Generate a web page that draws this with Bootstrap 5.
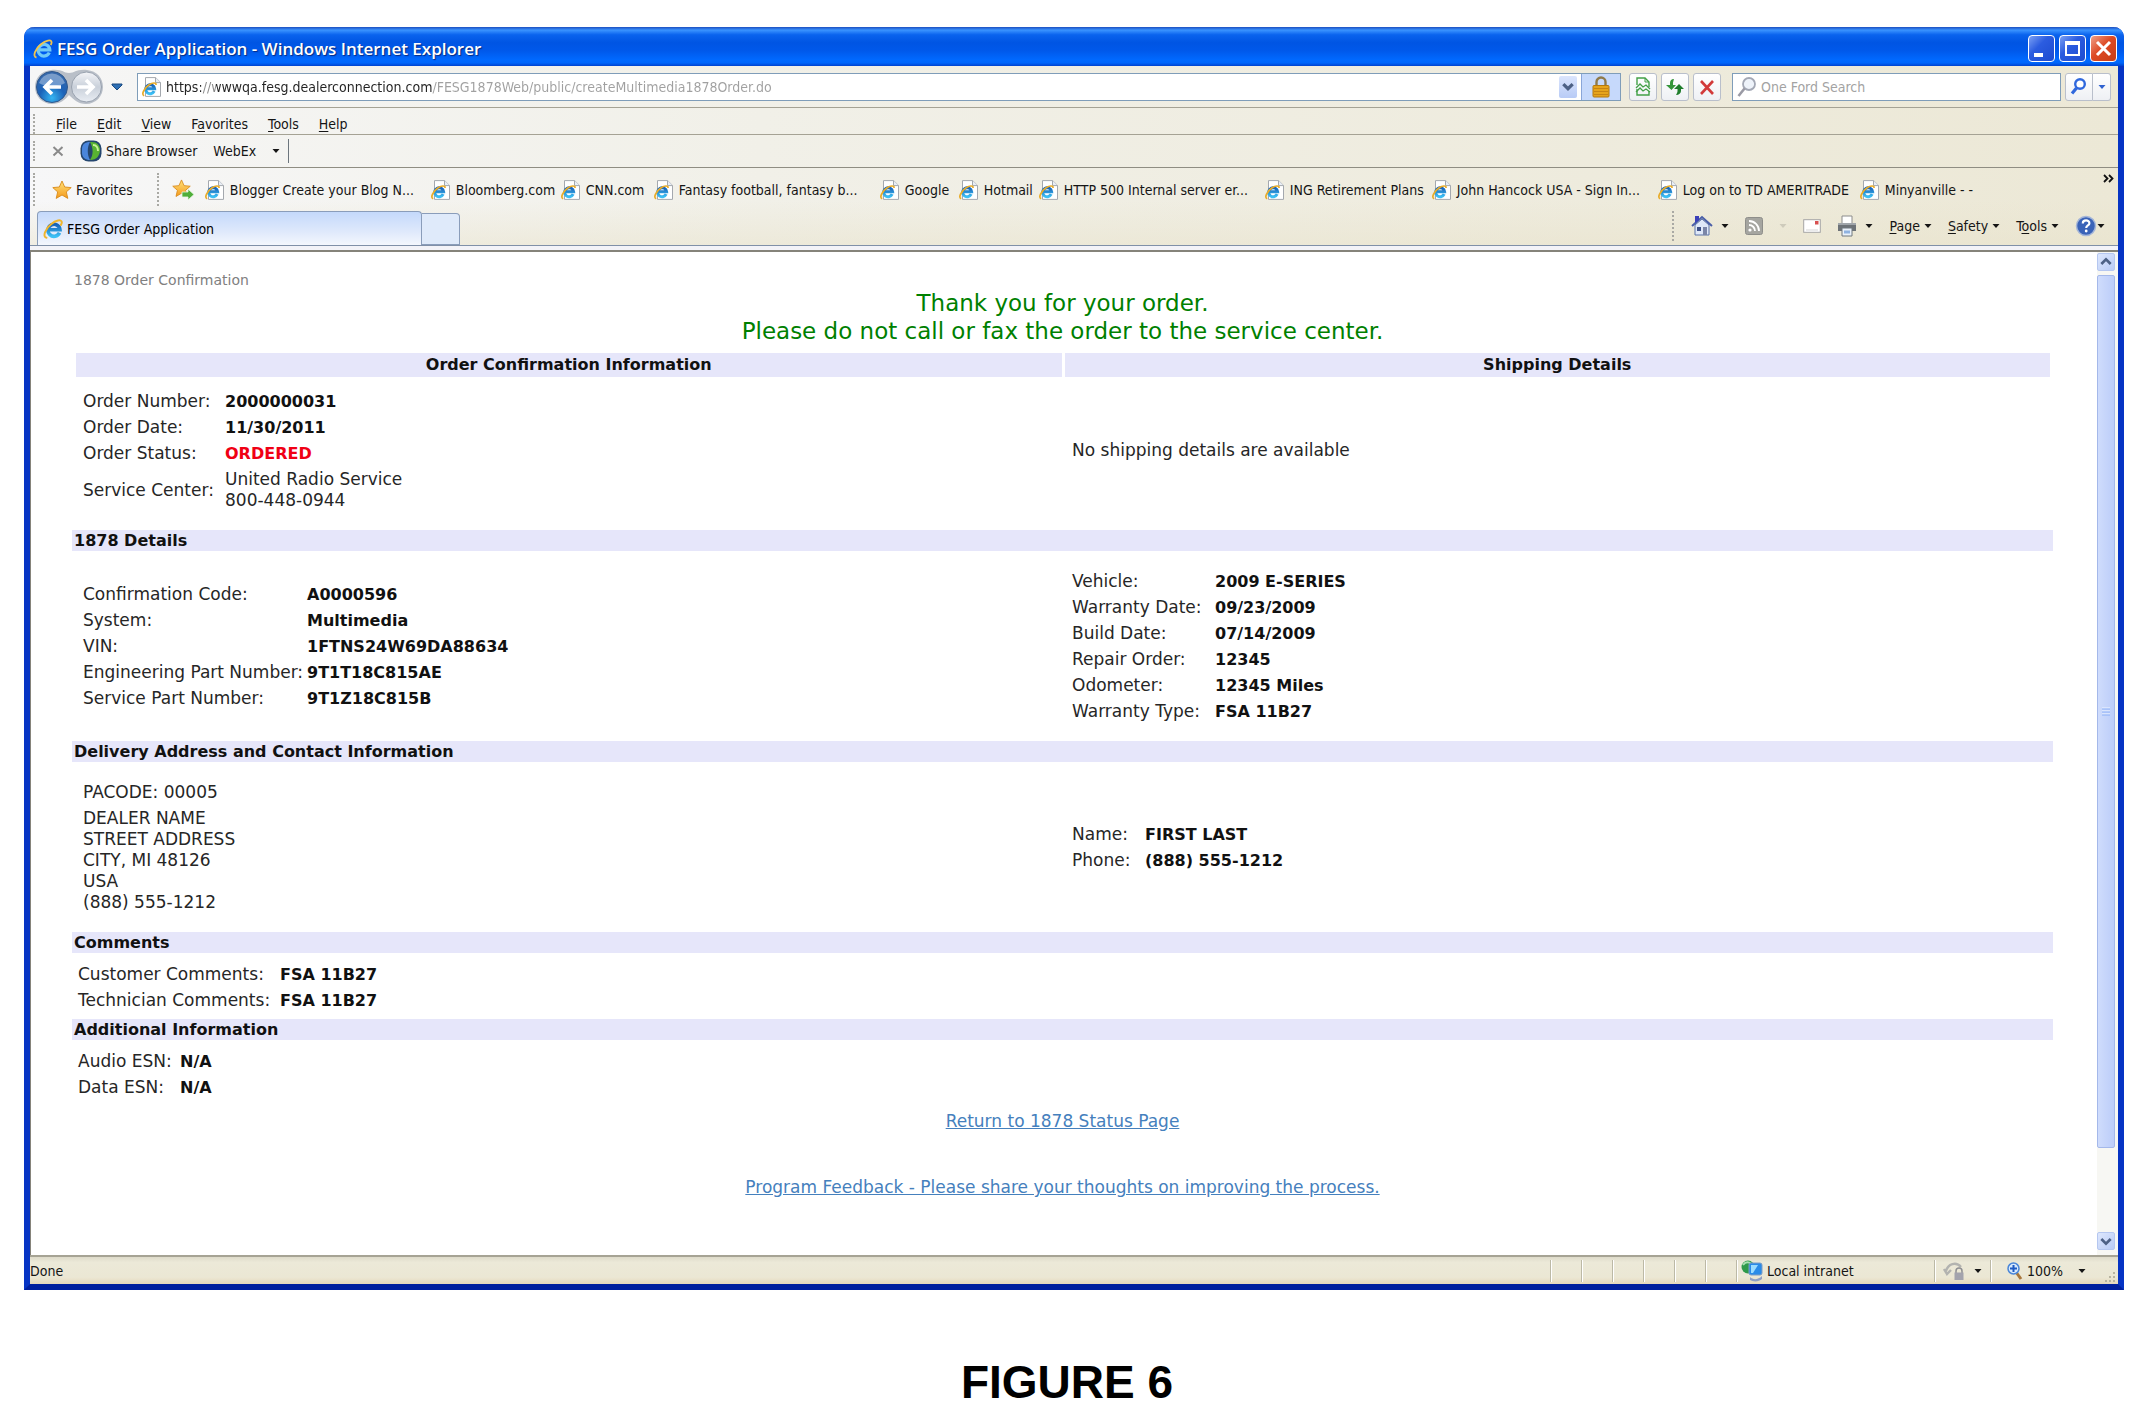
<!DOCTYPE html>
<html lang="en">
<head>
<meta charset="utf-8">
<meta name="viewport" content="width=device-width, initial-scale=1">
<title>FESG Order Application</title>
<link href="https://cdn.jsdelivr.net/npm/bootstrap@5.3.0/dist/css/bootstrap.min.css" rel="stylesheet">
<style>
body{background:#fff;color:#222;font-family:"DejaVu Sans",Verdana,sans-serif;font-size:16px;line-height:21px}
.ie-window{margin:27px 24px 0;border:solid #0a3fd0;border-width:0 6px 6px;border-color:#0a3fd0 #0634c4 #001f9e;border-radius:10px 10px 0 0;background:#ece9d8;font-family:"DejaVu Sans Condensed",Tahoma,sans-serif;font-size:14px;line-height:20px;color:#151515}
.ie-window svg{display:block;flex:none}
.title-strip{height:39px;margin:0 -6px;padding:4px 7px 0 9px;border-radius:10px 10px 0 0;background:linear-gradient(#1c4fc0 0,#3a93ff 8%,#0a63ee 20%,#0055e3 40%,#0058ea 60%,#0069ff 84%,#0066fb 92%,#0042cf 100%);color:#fff;gap:4px}
.title-strip h1{font:600 17px/24px "Open Sans",sans-serif;margin:0;text-shadow:1px 1px 1px #062a80}
.cap-btn{width:27px;height:27px;padding:0;border:1px solid #fff;border-radius:4px;background:linear-gradient(135deg,#7ba0f4,#2b5ce0 40%,#1d4bd0)}
.cap-close{background:linear-gradient(135deg,#f0a088,#dd4a24 45%,#c83c14)}
.nav-strip{height:42px;padding:1px 7px 0 5px;background:linear-gradient(90deg,#f6f6f6,#f1f0e8 35%,#ece8d6);border-bottom:1px solid #a5a294;box-shadow:0 1px #fff}
.plain{padding:0;border:0;background:none;color:inherit;line-height:20px;white-space:nowrap}
.plain u{text-underline-offset:2px}
.field{height:28px;border:1px solid #7f9db9;background:#fff}
.field input{border:0;outline:0;background:transparent;min-width:0;padding:0;height:24px;color:#333}
.addr-field{margin-left:14px}
.addr-field input{color:transparent;background:linear-gradient(90deg,#222 0 35px,#888 35px 50px,#222 50px 266px,#a0a0a0 266px);-webkit-background-clip:text;background-clip:text}
.drop-cap{width:18px;height:22px;background:linear-gradient(#dbe5fd,#b8cbf6);border-radius:2px}
.lock-cell{width:39px;height:26px;background:#c6d9fb;border-left:1px solid #8aa6d8}
.tool-btn{width:28px;height:28px;padding:0;border:1px solid #b9bfcb;border-radius:3px;background:linear-gradient(#fff,#eef0f4)}
.search-field{width:329px;margin-left:11px}
.search-field input::placeholder{color:#a3a3a3;opacity:1}
.go-btn{border-radius:3px 0 0 3px}
.go-more{width:18px;border-radius:0 3px 3px 0;border-left:0;color:#2f62d0}
.strip{background:linear-gradient(90deg,#f6f6f6,#f1f0e8 35%,#ece8d6);padding-left:3px}
.menu-strip{height:27px;padding-top:5px;border-bottom:1px solid #a5a294;gap:20px}
.webex-strip{height:33px;border-bottom:1px solid #8f8d82}
.fav-tabs{background:linear-gradient(#fff0 40%,#e8e2ca88),linear-gradient(90deg,#f7f7f8,#f1f0e8 35%,#ece8d6)}
.grip{width:3px;flex:none;border-left:2px dotted #a9a9a4}
.menu-strip .grip,.webex-strip .grip{height:20px}
.fav-row{height:43px;padding-left:3px}
.fav-grid{display:grid;grid-template-columns:226px 130px 93px 226px 79px 80px 226px 167px 226px 202px auto;margin-left:11px}
.fav-grid a,.fav-row a{color:inherit;text-decoration:none;display:flex;align-items:center;gap:5px;white-space:nowrap}
.tab-row{height:35px;padding-left:7px;border-bottom:1px solid #8090a8}
.tab-on{width:385px;height:34px;border:1px solid #8a9dba;border-bottom:0;border-radius:4px 4px 0 0;background:linear-gradient(#c4d9fb,#dfe9fb 60%,#f4f7fd);padding:0 5px;text-align:left}
.tab-new{width:38px;height:32px;border:1px solid #8a9dba;border-left-width:0;border-radius:0 4px 0 0;background:#dfeafa;padding:0}
.cmd-row{margin-right:13px;height:30px}
.cmd-row .plain{display:flex;align-items:center}
.seam{height:4px;background:#f3f3f8}
.viewport-row{border-top:2px solid #85837a;background:#fff}
.page-pane{padding:20px 44px 57px 41px;border-left:1px solid #85837a;font-family:"DejaVu Sans",Verdana,sans-serif;font-size:17px;line-height:21px;color:#262626}
.crumb{font-size:14px;line-height:17px;color:#808080;padding-left:2px}
.thanks{font-size:23px;line-height:28px;color:#008000;margin:0;font-weight:400;padding-bottom:8px}
.band{background:#e6e6fa;font-size:16px;font-weight:700;line-height:21px;color:#111;margin:0;padding-left:2px}
.split-bands{padding:0 3px 0 4px;gap:3px}
.split-bands .band{line-height:24px;padding:0;text-align:center}
.sect{padding:17px 0 17px 11px}
.sect-top{padding-top:11px}
.sect-low{padding:8px 0 6px 6px}
.facts td,.facts th{padding:3px 0 2px;font-weight:400;vertical-align:middle;white-space:nowrap}
.facts td{font-weight:700;color:#111;font-size:16px}
.facts td.soft{font-weight:400;color:#262626;font-size:17px}
.facts td.status{color:#f00014}
.w-order th{width:142px}.w-detail th{width:224px}.w-car th{width:143px}.w-name th{width:73px}.w-note th{width:202px}.w-esn th{width:102px}
.pane-links a{color:#4580bd;text-decoration:underline}
.pane-links p{margin:0;padding-top:11px;padding-bottom:34px}
.pane-links p+p{padding-bottom:0}
.scroller{width:21px;padding:1px 3px 5px 0;background:#f7f7f3}
.sc-btn{width:18px;height:18px;padding:0;border:1px solid #b5c7f0;border-radius:2px;background:linear-gradient(135deg,#dde7fd,#b9cbf5)}
.sc-thumb{width:18px;border:1px solid #a4b8ea;border-radius:2px;background:linear-gradient(90deg,#cfdcfc,#bccdf9);flex:0 1 873px;margin-top:4px}
.status-strip{height:29px;border-top:2px solid #a6a394;background:linear-gradient(#dedbca,#ece9d8 20%,#ebe7d4 75%,#e6d8bb)}
.cell-sep{width:31px;height:22px;border-left:1px solid #bcb9a6;box-shadow:inset 1px 0 #fff}
.s-zone{width:198px}.s-lock{width:56px}.s-zoom{width:112px}
.figure-name{font:700 46px/52px "Liberation Sans",Arial,sans-serif;color:#000;padding:66px 0 0;margin:0 14px 0 0}
</style>
<script src="https://cdn.jsdelivr.net/npm/bootstrap@5.3.0/dist/js/bootstrap.bundle.min.js" defer></script>
</head>
<body>
<svg width="0" height="0" class="position-absolute" aria-hidden="true">
<defs>
<radialGradient id="gBack" cx=".5" cy=".85" r=".9"><stop offset="0" stop-color="#35b5f2"/><stop offset=".45" stop-color="#1c62b8"/><stop offset="1" stop-color="#3c6aa8"/></radialGradient>
<linearGradient id="gFwd" x1="0" y1="0" x2="0" y2="1"><stop offset="0" stop-color="#f4f5f8"/><stop offset=".5" stop-color="#c9d0da"/><stop offset="1" stop-color="#e9edf3"/></linearGradient>
<linearGradient id="gE" x1="0" y1="0" x2="0" y2="1"><stop offset="0" stop-color="#1762b8"/><stop offset="1" stop-color="#3cc0f5"/></linearGradient>
<linearGradient id="gStar" x1="0" y1="0" x2="0" y2="1"><stop offset="0" stop-color="#ffe27a"/><stop offset="1" stop-color="#f59a1c"/></linearGradient>
</defs>
<symbol id="i-e" viewBox="0 0 20 20"><path d="M16.500 13.800A6 6 0 1 1 17 10.800H6" fill="none" stroke="url(#gE)" stroke-width="3.600"/><path d="M3.500 18.800C-1 17.800 2.500 9.500 8 5.200 12.500 1.500 18.500-.2 18.800 3.200c0 1-.4 1.900-.9 2.700" fill="none" stroke="#f0b52c" stroke-width="2" stroke-linecap="round"/></symbol>
<symbol id="i-page" viewBox="0 0 20 20"><path d="M3.500.6h10.200l4.800 4.800v14h-15z" fill="#fff" stroke="#a4a8ae"/><path d="M13.500.6v5h5" fill="#e9eef5" stroke="#a4a8ae"/><path d="M12.200 14.200A4.500 4.500 0 1 1 12.600 11.700H4" fill="none" stroke="url(#gE)" stroke-width="3"/><path d="M2.200 18.800c-3.400-1.200.2-7.800 4.600-10.800C10.500 5.500 14.400 5.200 14 8" fill="none" stroke="#e8ac2a" stroke-width="1.700"/></symbol>
<symbol id="i-star" viewBox="0 0 20 20"><path d="M10 1l2.700 6 6.500.6-4.900 4.300 1.500 6.500L10 15l-5.800 3.400 1.500-6.500L.8 7.600 7.300 7z" fill="url(#gStar)" stroke="#d88a1a" stroke-width=".9"/></symbol>
<symbol id="i-down" viewBox="0 0 8 8"><path d="M.5 2h7L4 6z" fill="currentColor"/></symbol>
<symbol id="i-chev" viewBox="0 0 12 12"><path d="M2 3.500L6 7.500 10 3.500" fill="none" stroke="#4d6185" stroke-width="2.800"/></symbol>
</svg>

<main class="ie-window">
<header class="title-strip d-flex align-items-center">
<svg width="20" height="20" viewBox="0 0 20 20"><path d="M16.300 13.600A5.800 5.800 0 1 1 16.800 10.800H6" fill="none" stroke="#6fc9f8" stroke-width="3.200"/><path d="M3.500 18.500C-1 17.500 2.500 9.500 8 5.200 12.500 1.500 18.500-.2 18.600 3.200c0 1-.4 1.900-.9 2.700" fill="none" stroke="#f0c44c" stroke-width="1.800"/></svg>
<h1 class="flex-grow-1">FESG Order Application - Windows Internet Explorer</h1>
<button class="cap-btn" aria-label="Minimize"><svg width="25" height="25" viewBox="0 0 25 25"><path d="M5 17h9v4H5z" fill="#fff"/></svg></button>
<button class="cap-btn" aria-label="Maximize"><svg width="25" height="25" viewBox="0 0 25 25"><path d="M6 7h13v12H6z" fill="none" stroke="#fff" stroke-width="2"/><path d="M5 7h15" stroke="#fff" stroke-width="4"/></svg></button>
<button class="cap-btn cap-close" aria-label="Close"><svg width="25" height="25" viewBox="0 0 25 25"><path d="M6 6l13 13M19 6L6 19" stroke="#fff" stroke-width="3"/></svg></button>
</header>

<div class="nav-strip d-flex align-items-center">
<button class="plain" aria-label="Back and forward"><svg width="68" height="36" viewBox="0 0 68 36"><path d="M16 1C28 0 28 4 34 4s7-4 18-3c10 1 16 8 16 17s-7 17-17 17c-8 0-13-5-17-9-4 5-9 9-17 9C7 35 0 27 0 18S6 2 16 1z" fill="#b9bfc8"/><circle cx="17" cy="18" r="15.500" fill="url(#gBack)" stroke="#30588c"/><path d="M4 14a13.500 13 0 0 1 26 0c-7 4-18 5-26 0z" fill="#fff" opacity=".35"/><path d="M26 18H11M17 11l-7 7 7 7" fill="none" stroke="#fff" stroke-width="3.600"/><circle cx="51.500" cy="18" r="15" fill="url(#gFwd)" stroke="#98a1ae"/><path d="M42 18h15M51 11l7 7-7 7" fill="none" stroke="#fff" stroke-width="3.600"/></svg></button>
<button class="plain ms-2" aria-label="Recent pages"><svg width="12" height="8" viewBox="0 0 12 8"><path d="M1 1h10v1L6 7 1 2z" fill="#2d6fb4" stroke="#1b4a80"/></svg></button>
<div class="field addr-field d-flex align-items-center flex-grow-1 ps-1">
<svg width="20" height="20"><use href="#i-page"/></svg>
<input class="flex-grow-1 ms-1" aria-label="Address" value="https://wwwqa.fesg.dealerconnection.com/FESG1878Web/public/createMultimedia1878Order.do">
<button class="plain drop-cap d-flex align-items-center justify-content-center me-1" aria-label="Address list"><svg width="14" height="14"><use href="#i-chev"/></svg></button>
<span class="lock-cell d-flex align-items-center justify-content-center"><svg width="18" height="22" viewBox="0 0 18 22"><path d="M4.500 11V6a4.500 4.500 0 0 1 9 0v5" fill="none" stroke="#8f7a4a" stroke-width="2.400"/><rect x="1" y="9.500" width="16" height="11.500" rx="1" fill="#e6a41c" stroke="#b5790f"/><path d="M2 12.500h14M2 15.500h14M2 18.500h14" stroke="#c68414"/></svg></span>
</div>
<button class="tool-btn ms-2" aria-label="Compatibility view"><svg width="26" height="26" viewBox="0 0 26 26"><path d="M7 11V4h8l4 4v5M7 15v6h12v-4" fill="none" stroke="#43a047" stroke-width="1.400"/><path d="M15 4v4h4" fill="none" stroke="#43a047"/><path d="M6 14l4-4 3 3 3-2 4 4M6 18l4-4 3 3 3-2 4 3" fill="none" stroke="#43a047" stroke-width="1.300"/></svg></button>
<button class="tool-btn ms-1" aria-label="Refresh"><svg width="26" height="26" viewBox="0 0 26 26"><path d="M12 5c-3 0-4 2-4 4v2H4l5.500 5L14 11h-3V9c0-1 .5-2 1-4z" fill="#35963a"/><path d="M14 21c3 0 5-2 5-4v-2h3l-5-5-5 5h3.500v2c0 1-.5 2-1.500 4z" fill="#1f7d2c"/></svg></button>
<button class="tool-btn ms-1" aria-label="Stop"><svg width="26" height="26" viewBox="0 0 26 26"><path d="M7 7l12 13M19 7L7 20" stroke="#d23a3a" stroke-width="2.600"/></svg></button>
<div class="field search-field d-flex align-items-center">
<svg class="ms-1" width="20" height="22" viewBox="0 0 20 22"><circle cx="12" cy="8" r="6" fill="#eef3fa" stroke="#a3a8b5" stroke-width="1.800"/><path d="M7.500 12.500L1.500 20" stroke="#9a9aa5" stroke-width="2.600"/></svg>
<input class="flex-grow-1 ms-1" aria-label="Search" placeholder="One Ford Search">
</div>
<button class="tool-btn go-btn ms-1" aria-label="Go"><svg width="26" height="26" viewBox="0 0 26 26"><circle cx="14" cy="10" r="4.800" fill="#fff" stroke="#3068dd" stroke-width="2.400"/><path d="M10.500 14L6 19.500" stroke="#3068dd" stroke-width="3.200"/></svg></button>
<button class="tool-btn go-more d-flex align-items-center justify-content-center" aria-label="Search options"><svg width="8" height="8"><use href="#i-down"/></svg></button>
</div>

<nav class="strip menu-strip d-flex align-items-center">
<span class="grip"></span>
<button class="plain"><u>F</u>ile</button><button class="plain"><u>E</u>dit</button><button class="plain"><u>V</u>iew</button><button class="plain">F<u>a</u>vorites</button><button class="plain"><u>T</u>ools</button><button class="plain"><u>H</u>elp</button>
</nav>
<div class="strip webex-strip d-flex align-items-center">
<span class="grip me-3"></span>
<button class="plain me-3" aria-label="Close toolbar"><svg width="12" height="12" viewBox="0 0 12 12"><path d="M1.500 2l9 8.500M10.500 2l-9 8.500" stroke="#8a8a8a" stroke-width="2"/></svg></button>
<button class="plain d-flex align-items-center gap-1 me-3"><svg width="22" height="22" viewBox="0 0 22 22"><rect x=".5" y=".5" width="21" height="21" rx="8" fill="#24466e"/><path d="M10 2C5 2 2 4.500 2 9v4c0 4.500 3.500 7 8 7-3-5-3-13 0-18z" fill="#4a86dc"/><path d="M10 2c7-.5 10 3 10 8s-3 10-10 10c3.500-5 3.500-12 0-18z" fill="#58b432"/><path d="M13 5c3.500 0 5 3 5 6" stroke="#c9f09a" fill="none" stroke-width="2"/></svg>Share Browser</button>
<button class="plain d-flex align-items-center gap-3">WebEx <svg width="8" height="8"><use href="#i-down"/></svg></button>
<span class="border-start border-secondary ms-2 h-75"></span>
</div>

<div class="fav-tabs">
<div class="fav-row d-flex align-items-center">
<span class="grip h-75"></span>
<button class="plain d-flex align-items-center gap-1 ms-3 me-4"><svg width="20" height="20"><use href="#i-star"/></svg>Favorites</button>
<span class="grip h-75 me-2"></span>
<button class="plain ms-1" aria-label="Add to favorites bar"><svg width="22" height="22" viewBox="0 0 22 22"><use href="#i-star" width="19" height="19"/><path d="M10 13h6v-3l6 5.500-6 5.500v-3h-6z" fill="#4fae3a" stroke="#e9f6e4" stroke-width=".8"/></svg></button>
<div class="fav-grid">
<a href="#"><svg width="20" height="20"><use href="#i-page"/></svg>Blogger Create your Blog N...</a>
<a href="#"><svg width="20" height="20"><use href="#i-page"/></svg>Bloomberg.com</a>
<a href="#"><svg width="20" height="20"><use href="#i-page"/></svg>CNN.com</a>
<a href="#"><svg width="20" height="20"><use href="#i-page"/></svg>Fantasy football, fantasy b...</a>
<a href="#"><svg width="20" height="20"><use href="#i-page"/></svg>Google</a>
<a href="#"><svg width="20" height="20"><use href="#i-page"/></svg>Hotmail</a>
<a href="#"><svg width="20" height="20"><use href="#i-page"/></svg>HTTP 500 Internal server er...</a>
<a href="#"><svg width="20" height="20"><use href="#i-page"/></svg>ING Retirement Plans</a>
<a href="#"><svg width="20" height="20"><use href="#i-page"/></svg>John Hancock USA - Sign In...</a>
<a href="#"><svg width="20" height="20"><use href="#i-page"/></svg>Log on to TD AMERITRADE</a>
<a href="#"><svg width="20" height="20"><use href="#i-page"/></svg>Minyanville - -</a>
</div>
<button class="plain ms-auto me-1 align-self-start" aria-label="More favorites"><svg width="12" height="20" viewBox="0 0 12 20"><path d="M2 7l3.500 3.500L2 14M7 7l3.500 3.500L7 14" fill="none" stroke="#111" stroke-width="1.800"/></svg></button>
</div>
<div class="tab-row d-flex align-items-end">
<button class="tab-on d-flex align-items-center gap-1"><svg width="20" height="20"><use href="#i-e"/></svg>FESG Order Application</button>
<button class="tab-new" aria-label="New tab"></button>
<div class="cmd-row d-flex align-items-center ms-auto align-self-start">
<span class="grip h-100 me-3"></span>
<button class="plain" aria-label="Home"><svg width="22" height="22" viewBox="0 0 22 22"><path d="M4 10v10h14V10l-7-6z" fill="#dfe8f8" stroke="#5a72a8"/><path d="M1 11L11 2l10 9" fill="none" stroke="#4a5fa8" stroke-width="2"/><path d="M4 1h4v4L4 8z" fill="#3b3fb8"/><path d="M12 12h4v8h-4z" fill="#7b86a8"/><path d="M6 12h4v4H6z" fill="#3d4f88"/></svg><svg class="ms-2" width="8" height="8"><use href="#i-down"/></svg></button>
<button class="plain ms-3" aria-label="Feeds"><svg width="18" height="18" viewBox="0 0 18 18"><rect x=".5" y=".5" width="17" height="17" rx="2" fill="#a5a5a0" stroke="#8e8e8a"/><circle cx="5" cy="13" r="1.600" fill="#fff"/><path d="M4 8a6 6 0 0 1 6 6M4 4a10 10 0 0 1 10 10" fill="none" stroke="#fff" stroke-width="1.800"/></svg><svg class="ms-3 text-black-50 opacity-25" width="8" height="8"><use href="#i-down"/></svg></button>
<button class="plain ms-3" aria-label="Mail"><svg width="18" height="14" viewBox="0 0 18 14"><rect x=".7" y=".7" width="16.600" height="12.600" fill="#fff" stroke="#a5a5a5"/><path d="M12 2h3.500v3.500H12z" fill="#d85050"/><path d="M3 11h12" stroke="#d5d5d5"/></svg></button>
<button class="plain ms-3" aria-label="Print"><svg width="20" height="22" viewBox="0 0 20 22"><path d="M5 1h10v8H5z" fill="#fff" stroke="#8c8c8c"/><path d="M1 8h18v8H1z" fill="#6d7277"/><path d="M1 8h18v2H1z" fill="#a0a5aa"/><path d="M5 13h10v8H5z" fill="#eaf1fa" stroke="#70787f"/><path d="M7 15.500h6v3H7z" fill="#8fb2e0"/></svg><svg class="ms-2" width="8" height="8"><use href="#i-down"/></svg></button>
<button class="plain ms-3"><span><u>P</u>age</span><svg class="ms-1" width="8" height="8"><use href="#i-down"/></svg></button>
<button class="plain ms-3"><span><u>S</u>afety</span><svg class="ms-1" width="8" height="8"><use href="#i-down"/></svg></button>
<button class="plain ms-3"><span>T<u>o</u>ols</span><svg class="ms-1" width="8" height="8"><use href="#i-down"/></svg></button>
<button class="plain ms-3" aria-label="Help"><svg width="22" height="22" viewBox="0 0 22 22"><circle cx="11" cy="11" r="9.500" fill="#3a63b8" stroke="#a5b6d8" stroke-width="1.500"/><path d="M7.800 8.500c0-4 6.600-4 6.600-.3 0 2.300-3.200 2.300-3.200 4.800" fill="none" stroke="#fff" stroke-width="2.200"/><circle cx="11.200" cy="16" r="1.400" fill="#fff"/></svg><svg width="8" height="8"><use href="#i-down"/></svg></button>
</div>
</div>
<div class="seam"></div>
</div>

<div class="viewport-row d-flex">
<section class="page-pane flex-grow-1">
<div class="crumb">1878 Order Confirmation</div>
<h2 class="thanks text-center">Thank you for your order.<br>Please do not call or fax the order to the service center.</h2>
<div class="split-bands d-flex"><h3 class="band w-50">Order Confirmation Information</h3><h3 class="band w-50">Shipping Details</h3></div>
<div class="row g-0 sect sect-top align-items-center">
<div class="col-6"><table class="facts w-order">
<tr><th scope="row">Order Number:</th><td>2000000031</td></tr>
<tr><th scope="row">Order Date:</th><td>11/30/2011</td></tr>
<tr><th scope="row">Order Status:</th><td class="status">ORDERED</td></tr>
<tr><th scope="row">Service Center:</th><td class="soft">United Radio Service<br>800-448-0944</td></tr>
</table></div>
<div class="col-6 ps-1">No shipping details are available</div>
</div>
<h3 class="band">1878 Details</h3>
<div class="row g-0 sect align-items-center">
<div class="col-6"><table class="facts w-detail">
<tr><th scope="row">Confirmation Code:</th><td>A0000596</td></tr>
<tr><th scope="row">System:</th><td>Multimedia</td></tr>
<tr><th scope="row">VIN:</th><td>1FTNS24W69DA88634</td></tr>
<tr><th scope="row">Engineering Part Number:</th><td>9T1T18C815AE</td></tr>
<tr><th scope="row">Service Part Number:</th><td>9T1Z18C815B</td></tr>
</table></div>
<div class="col-6 ps-1"><table class="facts w-car">
<tr><th scope="row">Vehicle:</th><td>2009 E-SERIES</td></tr>
<tr><th scope="row">Warranty Date:</th><td>09/23/2009</td></tr>
<tr><th scope="row">Build Date:</th><td>07/14/2009</td></tr>
<tr><th scope="row">Repair Order:</th><td>12345</td></tr>
<tr><th scope="row">Odometer:</th><td>12345 Miles</td></tr>
<tr><th scope="row">Warranty Type:</th><td>FSA 11B27</td></tr>
</table></div>
</div>
<h3 class="band">Delivery Address and Contact Information</h3>
<div class="row g-0 sect align-items-center">
<div class="col-6"><table class="facts">
<tr><td class="soft">PACODE: 00005</td></tr>
<tr><td class="soft">DEALER NAME<br>STREET ADDRESS<br>CITY, MI 48126<br>USA<br>(888) 555-1212</td></tr>
</table></div>
<div class="col-6 ps-1"><table class="facts w-name">
<tr><th scope="row">Name:</th><td>FIRST LAST</td></tr>
<tr><th scope="row">Phone:</th><td>(888) 555-1212</td></tr>
</table></div>
</div>
<h3 class="band">Comments</h3>
<div class="sect-low"><table class="facts w-note">
<tr><th scope="row">Customer Comments:</th><td>FSA 11B27</td></tr>
<tr><th scope="row">Technician Comments:</th><td>FSA 11B27</td></tr>
</table></div>
<h3 class="band">Additional Information</h3>
<div class="sect-low pb-0"><table class="facts w-esn">
<tr><th scope="row">Audio ESN:</th><td>N/A</td></tr>
<tr><th scope="row">Data ESN:</th><td>N/A</td></tr>
</table></div>
<div class="pane-links text-center"><p><a href="#">Return to 1878 Status Page</a></p><p><a href="#">Program Feedback - Please share your thoughts on improving the process.</a></p></div>
</section>
<div class="scroller d-flex flex-column">
<button class="sc-btn" aria-label="Scroll up"><svg width="16" height="16" viewBox="0 0 12 12"><path d="M2.500 7.500L6 4l3.500 3.500" fill="none" stroke="#4d6185" stroke-width="2"/></svg></button>
<div class="sc-thumb d-flex align-items-center justify-content-center"><svg width="8" height="10" viewBox="0 0 8 10"><path d="M0 1h8M0 4h8M0 7h8" stroke="#eef4fe"/><path d="M0 2h8M0 5h8M0 8h8" stroke="#8cb0f8"/></svg></div>
<button class="sc-btn mt-auto" aria-label="Scroll down"><svg width="16" height="16" viewBox="0 0 12 12"><path d="M2.500 4.500L6 8l3.500-3.500" fill="none" stroke="#4d6185" stroke-width="2"/></svg></button>
</div>
</div>

<footer class="status-strip d-flex align-items-center">
<span class="flex-grow-1">Done</span>
<span class="cell-sep"></span><span class="cell-sep"></span><span class="cell-sep"></span><span class="cell-sep"></span><span class="cell-sep"></span><span class="cell-sep"></span>
<span class="cell-sep s-zone d-flex align-items-center gap-1 ps-1"><svg width="22" height="22" viewBox="0 0 22 22"><circle cx="7" cy="7" r="6.500" fill="#2f9a4a"/><path d="M2 5c3-4 6-3 8-1" stroke="#a9e0b0" fill="none" stroke-width="2"/><rect x="8" y="3" width="13" height="12" rx="2" fill="#2a8be8" stroke="#7f9cc4"/><path d="M10 5h7l-5 8h-2z" fill="#9bdcff"/><path d="M9 17c3 3 8 3 12-1v3c-3 3-9 3-12 1z" fill="#8f9fc4"/></svg>Local intranet</span>
<span class="cell-sep s-lock d-flex align-items-center justify-content-between ps-2 pe-2"><svg width="22" height="20" viewBox="0 0 22 20"><path d="M3 10C5 3 13 0 18 6M1 8l3 5 4-4" fill="none" stroke="#b3b3b0" stroke-width="2.400"/><path d="M13 12v-2a3 3 0 0 1 6 0v2" fill="none" stroke="#8f8f93" stroke-width="1.500"/><path d="M11.500 11.500h9V19h-9z" fill="#a3a3ad"/></svg><svg width="8" height="8"><use href="#i-down"/></svg></span>
<span class="cell-sep s-zoom d-flex align-items-center gap-1 ps-3"><svg width="16" height="18" viewBox="0 0 16 18"><path d="M9 10l5 7" stroke="#a9773c" stroke-width="3"/><circle cx="6.500" cy="6.500" r="5.500" fill="#d8eafc" stroke="#4a86d8" stroke-width="1.500"/><path d="M6.500 3v7M3 6.500h7" stroke="#1e5bc4" stroke-width="2"/></svg>100%<svg class="ms-auto me-3" width="8" height="8"><use href="#i-down"/></svg></span>
<svg class="align-self-end" width="16" height="16" viewBox="0 0 16 16"><path d="M11 4h2v2h-2zM7 8h2v2H7zM11 8h2v2h-2zM3 12h2v2H3zM7 12h2v2H7zM11 12h2v2h-2z" fill="#b8b4a0"/></svg>
</footer>
</main>
<p class="figure-name text-center">FIGURE 6</p>
</body>
</html>
